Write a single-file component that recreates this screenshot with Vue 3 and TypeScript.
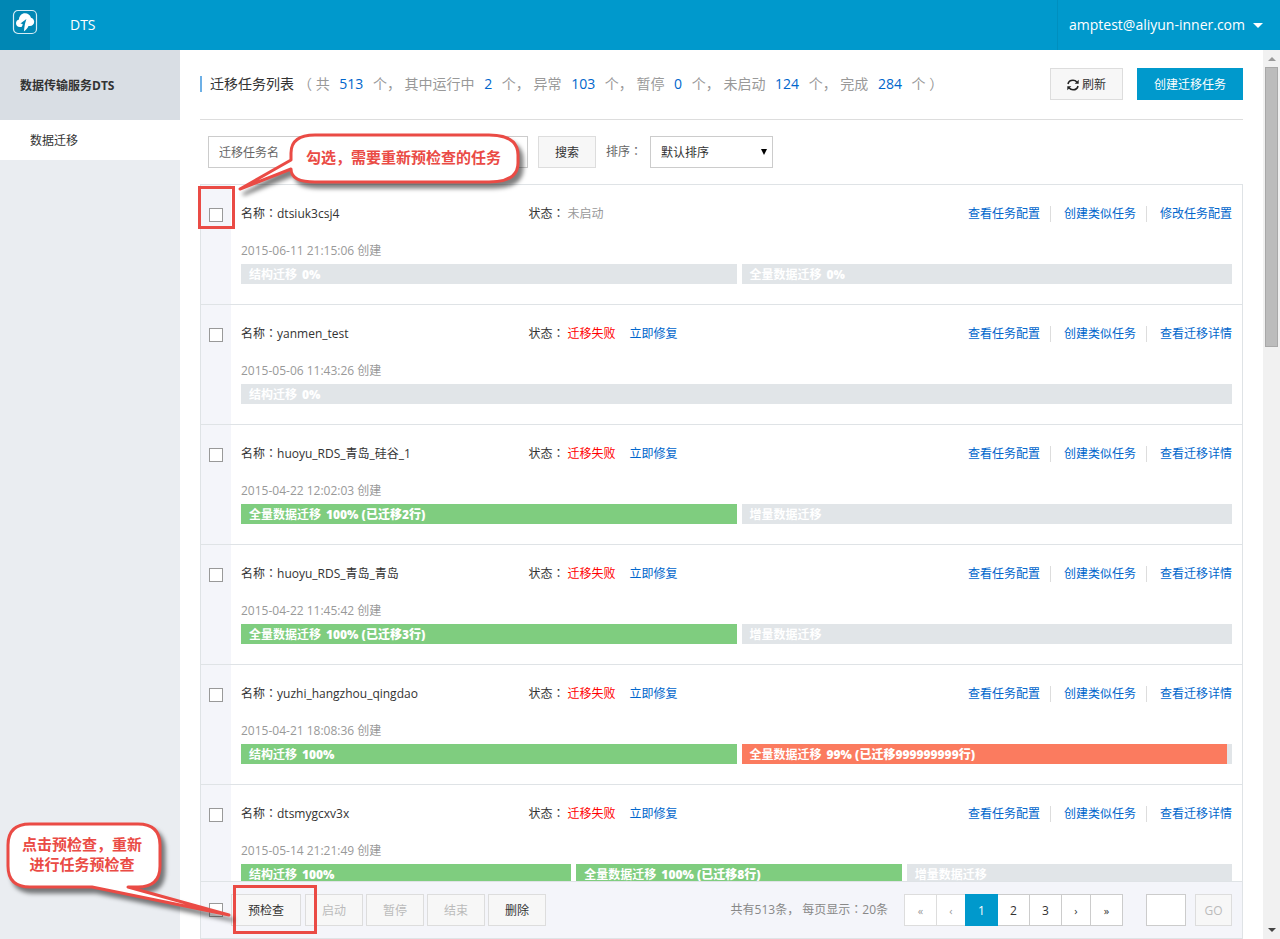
<script setup lang="ts">
import { ref } from 'vue'

interface Stage { label: string; percent: number; note?: string; tone: 'ok' | 'bad' | 'idle' }
interface Task { name: string; created: string; failed: boolean; last: string; stages: Stage[] }

const stats = [
  { label: '共', count: 513 },
  { label: '其中运行中', count: 2 },
  { label: '异常', count: 103 },
  { label: '暂停', count: 0 },
  { label: '未启动', count: 124 },
  { label: '完成', count: 284 },
]

const idle = (label: string, note = ''): Stage => ({ label, note, percent: 0, tone: 'idle' })
const done = (label: string, note = '100%'): Stage => ({ label, note, percent: 100, tone: 'ok' })

const tasks: Task[] = [
  { name: 'dtsiuk3csj4', created: '2015-06-11 21:15:06', failed: false, last: '修改任务配置', stages: [idle('结构迁移', '0%'), idle('全量数据迁移', '0%')] },
  { name: 'yanmen_test', created: '2015-05-06 11:43:26', failed: true, last: '查看迁移详情', stages: [idle('结构迁移', '0%')] },
  { name: 'huoyu_RDS_青岛_硅谷_1', created: '2015-04-22 12:02:03', failed: true, last: '查看迁移详情', stages: [done('全量数据迁移', '100% (已迁移2行)'), idle('增量数据迁移')] },
  { name: 'huoyu_RDS_青岛_青岛', created: '2015-04-22 11:45:42', failed: true, last: '查看迁移详情', stages: [done('全量数据迁移', '100% (已迁移3行)'), idle('增量数据迁移')] },
  { name: 'yuzhi_hangzhou_qingdao', created: '2015-04-21 18:08:36', failed: true, last: '查看迁移详情', stages: [done('结构迁移'), { label: '全量数据迁移', note: '99% (已迁移999999999行)', percent: 99, tone: 'bad' }] },
  { name: 'dtsmygcxv3x', created: '2015-05-14 21:21:49', failed: true, last: '查看迁移详情', stages: [done('结构迁移'), done('全量数据迁移', '100% (已迁移8行)'), idle('增量数据迁移')] },
]

const keyword = ref('迁移任务名')
const pages = ['«', '‹', '1', '2', '3', '›', '»']
</script>

<template>
  <div class="app">
    <header class="top">
      <a class="logo" href="#" aria-label="首页">
        <svg viewBox="0 0 26 26" width="26" height="26" aria-hidden="true">
          <rect x="1.5" y="1.5" width="23" height="23" rx="4.5" fill="none" stroke="#d5ecf5" stroke-width="1.2" />
          <path fill="#fff" d="M9.500 18H7.800C5.600 18 4 16.300 4 14.200c0-1.900 1.200-3.400 3-3.800C7.100 7 9.700 4.300 13 4.300c2.800 0 5.100 1.700 6 4.400 1.900.5 3.200 2.100 3.200 4.100 0 2.400-1.900 4.300-4.300 4.300h-1.400c-1.100 2.300-2.500 4.200-4.600 5.300.4-3 .6-5.300 1.100-7.600l1.400-4.700-6 4.500 2.300.3c-.1 1.200-.5 2.200-1.200 3.100z" />
        </svg>
      </a>
      <span class="product">DTS</span>
      <button class="account" type="button">amptest@aliyun-inner.com<i class="caret"></i></button>
    </header>

    <div class="body">
      <nav class="side">
        <h2>数据传输服务DTS</h2>
        <a href="#">数据迁移</a>
      </nav>

      <main class="main">
        <div class="title-bar">
          <h1>迁移任务列表</h1>
          <p class="stats">
            （ <template v-for="(s, i) in stats" :key="s.label">{{ s.label }} <b>{{ s.count }}</b> 个{{ i < stats.length - 1 ? '， ' : ' ' }}</template>）
          </p>
          <button class="btn refresh" type="button">
            <svg viewBox="0 0 12 12" width="12" height="12" aria-hidden="true">
              <path d="M1 5C1.500 2.600 3.500 1.200 6 1.200c1.600 0 2.900.6 3.800 1.700M11 7c-.5 2.400-2.500 3.800-5 3.800-1.600 0-2.900-.6-3.800-1.700" fill="none" stroke="#222" stroke-width="1.600" />
              <path d="M11.700.8v4H7.700zM.3 11.200v-4h4z" fill="#222" />
            </svg>刷新</button>
          <button class="btn primary" type="button">创建迁移任务</button>
        </div>

        <form class="filters" @submit.prevent>
          <input v-model="keyword" class="search" type="text" aria-label="迁移任务名" />
          <button class="btn" type="submit">搜索</button>
          <label for="sort">排序<span class="punct">：</span></label>
          <span class="select">
            <select id="sort"><option>默认排序</option></select>
          </span>
        </form>

        <ul class="list">
          <li v-for="t in tasks" :key="t.name" class="task">
            <div class="pick"><input type="checkbox" :aria-label="t.name" /></div>
            <div class="info">
              <div class="line">
                <span class="name">名称<span class="punct">：</span>{{ t.name }}</span>
                <span class="state">状态<span class="punct">：</span>
                  <template v-if="t.failed"><em>迁移失败</em><a href="#">立即修复</a></template>
                  <span v-else class="muted">未启动</span>
                </span>
                <span class="links">
                  <a href="#">查看任务配置</a><a href="#">创建类似任务</a><a href="#">{{ t.last }}</a>
                </span>
              </div>
              <div class="date">{{ t.created }} 创建</div>
              <div class="stages">
                <div v-for="s in t.stages" :key="s.label" class="stage">
                  <div class="track">
                    <div class="fill" :class="s.tone" :style="{ width: s.percent + '%' }"></div>
                    <span>{{ s.label }}<b v-if="s.note">{{ s.note }}</b></span>
                  </div>
                </div>
              </div>
            </div>
          </li>
        </ul>

        <footer class="foot">
          <div class="pick"><input type="checkbox" aria-label="全选" /></div>
          <button class="btn check" type="button">预检查</button>
          <div class="group">
            <button class="btn" type="button" disabled>启动</button>
            <button class="btn" type="button" disabled>暂停</button>
            <button class="btn" type="button" disabled>结束</button>
            <button class="btn" type="button">删除</button>
          </div>
          <span class="total">共有513条， 每页显示<span class="punct">：</span>20条</span>
          <div class="pager">
            <button v-for="(p, i) in pages" :key="p" type="button" :class="{ on: p === '1', off: i < 2, arrow: i < 2 || i > 4 }">{{ p }}</button>
          </div>
          <input class="goto" type="text" aria-label="页码" />
          <button class="btn go" type="button" disabled>GO</button>
        </footer>
      </main>

      <div class="scroll" aria-hidden="true">
        <i class="up"></i><i class="thumb"></i><i class="down"></i>
      </div>
    </div>

    <div class="mark mark-row"></div>
    <div class="mark mark-check"></div>
    <div class="note note-row">
      <svg viewBox="0 0 300 70" width="300" height="70" aria-hidden="true">
        <path d="M83 4H257Q286 4 286 24V32Q286 51 257 51H83Q59 51 59 38L8 58L59 29V22Q59 4 83 4Z" />
      </svg>
      <p>勾选，需要重新预检查的任务</p>
    </div>
    <div class="note note-check">
      <svg viewBox="0 0 240 104" width="240" height="104" aria-hidden="true">
        <path d="M30 4H138Q160 4 160 25V46Q160 67 138 67H128L229 95L92 67H30Q8 67 8 46V25Q8 4 30 4Z" />
      </svg>
      <p>点击预检查，重新<br />进行任务预检查</p>
    </div>
  </div>
</template>

<style>
body { margin: 0; }
</style>

<style scoped>
* { box-sizing: border-box; }
.app {
  position: relative;
  display: flex;
  flex-direction: column;
  height: 100vh;
  overflow: hidden;
  background: #fff;
  color: #333;
  font: 12px/20px "Open Sans", "Noto Sans CJK SC", sans-serif;
}
button, input, select { font: inherit; color: inherit; margin: 0; border-radius: 0; }
a { color: #06c; text-decoration: none; }
.punct { font-family: "Noto Sans CJK TC", sans-serif; line-height: 1; }

.top { display: flex; align-items: center; height: 50px; flex: none; background: #09c; color: #fff; }
.logo { width: 50px; height: 50px; padding: 9px 12px; background: #0087b4; }
.logo svg { display: block; }
.product { margin-left: 20px; font-size: 14px; }
.account { display: flex; align-items: center; gap: 8px; height: 50px; margin-left: auto; padding: 0 17px 0 11px; border: 0; border-left: 1px solid #008fbf; background: none; font-size: 14px; font-weight: 500; }
.caret { border: 5px solid transparent; border-top-color: #fff; border-bottom: 0; }

.body { display: flex; flex: 1; min-height: 0; }
.side { width: 180px; flex: none; background: #eaedf1; }
.side h2 { height: 70px; margin: 0; padding: 1px 0 0 20px; background: #d9dee4; font-size: 12px; line-height: 70px; }
.side a { display: block; height: 40px; padding: 1px 0 0 30px; background: #fff; color: #333; line-height: 40px; }

.main { display: flex; flex-direction: column; flex: 1; min-width: 0; padding: 0 20px; }
.title-bar { display: flex; align-items: center; flex: none; height: 70px; padding-bottom: 2px; border-bottom: 1px solid #ddd; }
h1 { margin: 0; padding-left: 8px; border-left: 2px solid #6db0e6; font-size: 14px; font-weight: 400; line-height: 16px; }
.stats { flex: 1; margin: 0 0 0 4px; color: #999; font-size: 14px; white-space: nowrap; }
.stats b { margin: 0 6px; color: #06c; font-weight: 400; }
.btn { height: 32px; padding: 2px 16px 0; border: 1px solid #ddd; background: #f7f7f7; color: #333; white-space: nowrap; }
.btn:disabled { color: #bbb; }
.btn.primary { margin-left: 14px; border-color: #09c; background: #09c; color: #fff; }
.refresh { display: flex; align-items: center; gap: 3px; }

.filters { display: flex; align-items: center; flex: none; margin: 16px 0 16px 8px; }
.search { width: 320px; height: 32px; margin-right: 10px; padding: 0 10px; border: 1px solid #ccc; background: #fff; color: #666; }
.filters label { margin: 0 8px 0 10px; color: #666; }
.select { position: relative; }
.select::after { content: ""; position: absolute; top: 13px; right: 6px; border: 3px solid transparent; border-top: 6px solid #000; border-bottom: 0; pointer-events: none; }
.select select { display: block; width: 123px; height: 32px; padding: 2px 10px 0; border: 1px solid #ccc; background: #fff; appearance: none; }

.list { flex: 1; min-height: 0; margin: 0; padding: 0; overflow: hidden; border: 1px solid #dfe3e6; border-bottom: 0; list-style: none; }
.task { display: flex; height: 120px; border-bottom: 1px solid #dfe3e6; }
.pick { width: 30px; flex: none; background: #f4f5fa; }
.pick input { display: block; appearance: none; width: 14px; height: 14px; border: 1px solid #999; background: #fff; }
.task .pick input { margin: 23px 0 0 8px; }
.info { flex: 1; min-width: 0; padding: 19px 10px 0; }
.line { display: flex; }
.name { width: 29%; flex: none; }
.state em, .muted { margin-left: 3px; }
.state em { margin-right: 14px; color: #f00; font-style: normal; }
.muted, .date { color: #999; }
.links { display: flex; margin-left: auto; }
.links a + a { margin-left: 10px; padding-left: 14px; background: linear-gradient(#ddd, #ddd) 0 2px / 1px 16px no-repeat; }
.date { margin-top: 17px; }
.stages { display: grid; grid-auto-flow: column; grid-auto-columns: minmax(0, 1fr); margin-top: 3px; }
.stage + .stage { padding-left: 5px; }
.track { display: grid; height: 20px; background: #e1e5e8; color: #fff; font-weight: 700; }
.track > * { grid-area: 1 / 1; }
.track span { padding-left: 8px; line-height: 22px; white-space: nowrap; }
.track b { margin-left: 5px; }
.fill { height: 20px; }
.ok { background: #7fcd7f; }
.bad { background: #fb7b5f; }

.foot { display: flex; align-items: center; flex: none; height: 58px; border: 1px solid #dfe3e6; background: #f4f5fa; }
.foot .pick input { margin-left: 8px; }
.check { margin-right: 4px; }
.group { display: flex; gap: 3px; }
.total { margin-left: auto; color: #888; }
.pager { display: flex; margin-left: 16px; }
.pager button { width: 33px; height: 32px; margin-right: -1px; padding: 2px 0 0; border: 1px solid #ccc; background: #fff; }
.pager .arrow { font-size: 11px; }
.pager .off { border-color: #ddd; color: #999; }
.pager .on { position: relative; border-color: #09c; background: #09c; color: #fff; }
.pager button:nth-child(2), .pager button:nth-child(6) { width: 30px; }
.goto { width: 40px; height: 32px; margin: 0 9px 0 24px; border: 1px solid #ccc; background: #fff; }
.go { width: 37px; margin-right: 10px; padding-right: 0; padding-left: 0; }

.scroll { display: flex; flex-direction: column; align-items: center; width: 17px; flex: none; padding: 7px 0; background: #f1f1f1; }
.up { border: 4px solid transparent; border-top: 0; border-bottom-color: #999; }
.thumb { width: 13px; height: 32%; margin-top: 6px; border: 1px solid #a8a8a8; background: #bcbcbc; }
.down { margin-top: auto; border: 4px solid transparent; border-bottom: 0; border-top-color: #444; }

.mark { position: absolute; border: 3px solid #ea4b45; pointer-events: none; }
.mark-row { left: 198px; top: 186px; width: 37px; height: 43px; }
.mark-check { left: 233px; top: 885px; width: 84px; height: 49px; }
.note { position: absolute; color: #ea4b45; font-size: 15px; font-weight: 700; pointer-events: none; }
.note svg { display: block; overflow: visible; filter: drop-shadow(4px 5px 2px rgba(0, 0, 0, .5)); }
.note path { fill: #fff; stroke: #ea4b45; stroke-width: 3; stroke-linejoin: round; }
.note p { position: absolute; margin: 0; text-align: center; white-space: nowrap; }
.note-row { left: 232px; top: 131px; }
.note-row p { left: 74px; top: 16px; }
.note-check { left: 0; top: 820px; }
.note-check p { left: 22px; top: 14px; }
</style>
